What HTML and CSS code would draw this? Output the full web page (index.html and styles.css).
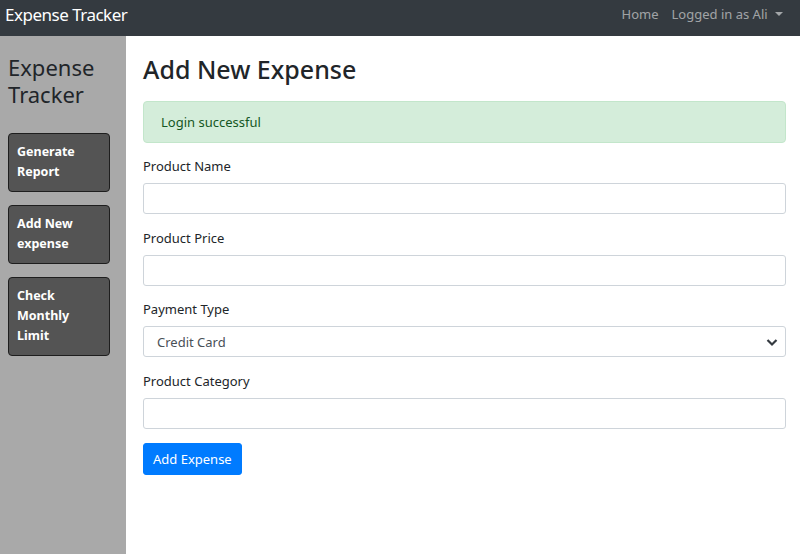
FILE: index.html
```html
<!DOCTYPE html>
<html>
<head>
<meta charset="utf-8">
<link rel="stylesheet" href="styles.css">
</head>
<body>
<nav class="navbar">
  <a class="brand">Expense Tracker</a>
  <div class="nav-links">
    <a class="nav-link">Home</a>
    <a class="nav-link dropdown">Logged in as Ali <span class="caret"></span></a>
  </div>
</nav>
<div class="layout">
  <aside class="sidebar">
    <h2 class="side-title">Expense Tracker</h2>
    <a class="side-btn">Generate Report</a>
    <a class="side-btn">Add New expense</a>
    <a class="side-btn">Check Monthly Limit</a>
  </aside>
  <main class="main">
    <h1 class="page-title">Add New Expense</h1>
    <div class="alert">Login successful</div>
    <form class="form">
      <div class="group">
        <label class="label">Product Name</label>
        <input class="control" type="text">
      </div>
      <div class="group">
        <label class="label">Product Price</label>
        <input class="control" type="text">
      </div>
      <div class="group">
        <label class="label">Payment Type</label>
        <div class="select-wrap">
          <select class="control select">
            <option>Credit Card</option>
          </select>
          <svg class="chev" width="12" height="10" viewBox="0 0 12 10"><path d="M1.5 3 L6 7.5 L10.5 3" fill="none" stroke="#343a40" stroke-width="2.2"/></svg>
        </div>
      </div>
      <div class="group">
        <label class="label">Product Category</label>
        <input class="control" type="text">
      </div>
      <button class="btn" type="button">Add Expense</button>
    </form>
  </main>
</div>
</body>
</html>
```

FILE: styles.css
```css
* { box-sizing: border-box; }
html, body { margin: 0; height: 100%; }
body {
  font-family: "Noto Sans", "Open Sans", sans-serif;
  color: #212529;
  font-size: 13px;
  display: flex;
  flex-direction: column;
  background: #fff;
}
.navbar {
  height: 36px;
  background: #343a40;
  display: flex;
  align-items: center;
  justify-content: space-between;
  padding: 0 17px 0 5px;
  flex: none;
}
.brand {
  color: #fff;
  font-size: 17px;
  letter-spacing: -0.5px;
  position: relative;
  top: -4px;
}
.nav-links { display: flex; gap: 13px; position: relative; top: -4px; }
.nav-link { color: rgba(255,255,255,.55); font-size: 13px; }
.caret {
  display: inline-block;
  width: 0; height: 0;
  margin-left: 4px;
  vertical-align: 3px;
  border-top: 4px solid rgba(255,255,255,.55);
  border-left: 4px solid transparent;
  border-right: 4px solid transparent;
}
.layout { flex: 1; display: flex; }
.sidebar {
  width: 126px;
  background: #a9a9a9;
  padding: 18px 16px 0 8px;
  flex: none;
}
.side-title {
  margin: 0 0 25px;
  font-weight: 400;
  font-size: 22px;
  line-height: 27px;
  color: #212529;
}
.side-btn {
  display: block;
  background: #545454;
  border: 1px solid #1e1e1e;
  border-radius: 4px;
  color: #fff;
  font-weight: 700;
  font-size: 12.5px;
  line-height: 20px;
  padding: 8px 8px 8.5px;
  margin-bottom: 13.5px;
}
.main { flex: 1; padding: 14px 14px 0 17px; }
.page-title {
  margin: 0 0 13px;
  font-size: 25px;
  font-weight: 500;
  line-height: 38px;
}
.alert {
  background: #d4edda;
  border: 1px solid #c3e6cb;
  color: #155724;
  border-radius: 4px;
  height: 42px;
  padding: 0 17px;
  display: flex;
  align-items: center;
  margin-bottom: 13px;
}
.group { margin-bottom: 13.5px; }
.label { display: block; margin-bottom: 7px; line-height: 20px; }
.control {
  display: block;
  width: 100%;
  height: 31px;
  border: 1px solid #ced4da;
  border-radius: 3px;
  background: #fff;
  font-family: inherit;
  font-size: 13px;
  color: #495057;
  padding: 0 13px;
}
.select-wrap { position: relative; }
.select { appearance: none; -webkit-appearance: none; }
.chev { position: absolute; right: 8px; top: 11px; pointer-events: none; }
.btn {
  margin-top: 1px;
  background: #007bff;
  color: #fff;
  border: 1px solid #007bff;
  border-radius: 3px;
  height: 32px;
  padding: 0 9px;
  font-family: inherit;
  font-size: 13px;
}
```
